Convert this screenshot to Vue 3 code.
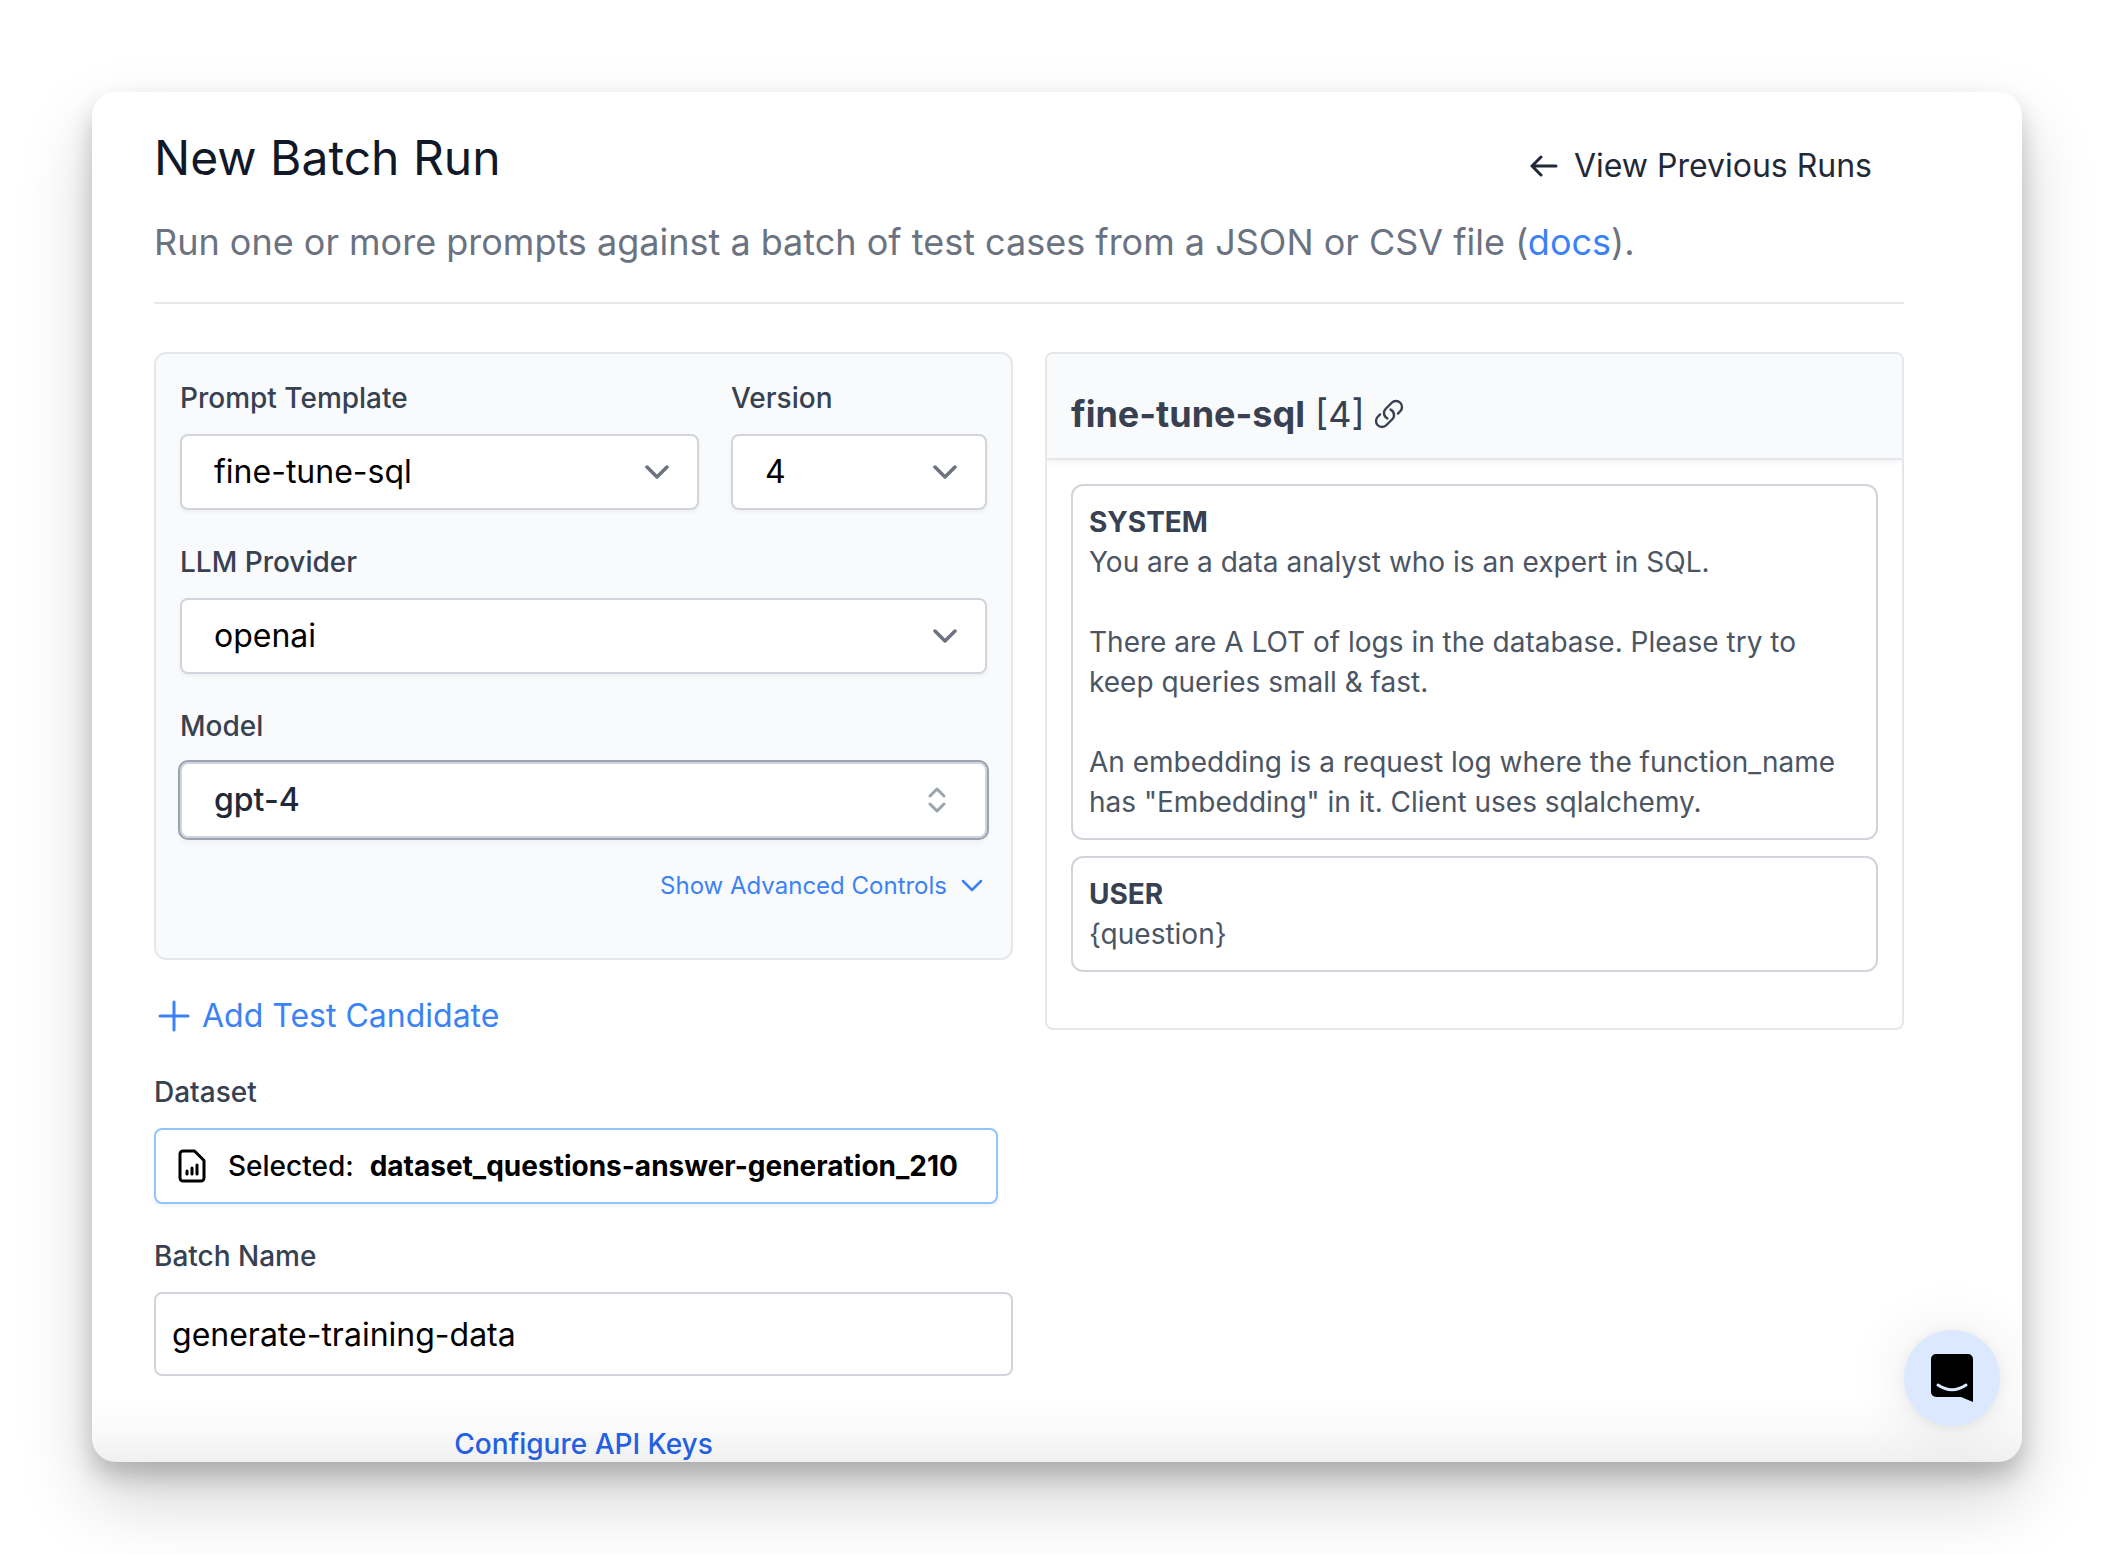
<script setup>
import { ref } from 'vue'

const template = ref('fine-tune-sql')
const version = ref('4')
const provider = ref('openai')
const model = ref('gpt-4')
const batchName = ref('generate-training-data')

const messages = [
  {
    role: 'SYSTEM',
    content:
      'You are a data analyst who is an expert in SQL.\n\nThere are A LOT of logs in the database. Please try to keep queries small & fast.\n\nAn embedding is a request log where the function_name has "Embedding" in it. Client uses sqlalchemy.'
  },
  { role: 'USER', content: '{question}' }
]
</script>

<template>
  <div class="stage">
    <main class="window">
      <header class="page-header">
        <div class="title-row">
          <h1>New Batch Run</h1>
          <a class="back" href="#runs">
            <svg width="28" height="22" viewBox="0 0 28 22" aria-hidden="true">
              <path d="M26 11H2M11 2L2 11l9 9" />
            </svg>
            View Previous Runs
          </a>
        </div>
        <p class="subtitle">
          Run one or more prompts against a batch of test cases from a JSON or CSV file (<a href="#docs">docs</a>).
        </p>
      </header>

      <div class="columns">
        <form class="column" @submit.prevent>
          <section class="panel">
            <div class="field-row">
              <div class="field grow">
                <label for="template">Prompt Template</label>
                <div class="select">
                  <select id="template" v-model="template">
                    <option>fine-tune-sql</option>
                  </select>
                  <svg class="chevron" width="24" height="16" viewBox="0 0 24 16" aria-hidden="true">
                    <path d="M2 3l10 10L22 3" />
                  </svg>
                </div>
              </div>
              <div class="field version">
                <label for="version">Version</label>
                <div class="select">
                  <select id="version" v-model="version">
                    <option>4</option>
                  </select>
                  <svg class="chevron" width="24" height="16" viewBox="0 0 24 16" aria-hidden="true">
                    <path d="M2 3l10 10L22 3" />
                  </svg>
                </div>
              </div>
            </div>
            <div class="field">
              <label for="provider">LLM Provider</label>
              <div class="select">
                <select id="provider" v-model="provider">
                  <option>openai</option>
                </select>
                <svg class="chevron" width="24" height="16" viewBox="0 0 24 16" aria-hidden="true">
                  <path d="M2 3l10 10L22 3" />
                </svg>
              </div>
            </div>
            <div class="field">
              <label for="model">Model</label>
              <div class="select active">
                <select id="model" v-model="model">
                  <option>gpt-4</option>
                </select>
                <svg class="sorter" width="18" height="26" viewBox="0 0 18 26" aria-hidden="true">
                  <path d="M2 9l7-7 7 7M2 17l7 7 7-7" />
                </svg>
              </div>
            </div>
            <button class="advanced" type="button">
              Show Advanced Controls
              <svg width="22" height="14" viewBox="0 0 22 14" aria-hidden="true">
                <path d="M2 2l9 9 9-9" />
              </svg>
            </button>
          </section>

          <button class="add" type="button">
            <svg width="32" height="32" viewBox="0 0 32 32" aria-hidden="true">
              <path d="M16 2v28M2 16h28" />
            </svg>
            Add Test Candidate
          </button>

          <div class="field">
            <label for="dataset">Dataset</label>
            <button id="dataset" class="dataset" type="button">
              <svg width="28" height="34" viewBox="0 0 28 34" aria-hidden="true">
                <path d="M5 2h11.500L26 11.500V29a3 3 0 0 1-3 3H5a3 3 0 0 1-3-3V5a3 3 0 0 1 3-3z" />
                <path d="M9 25v-3M14 25v-6M19 25v-9" />
              </svg>
              <span>Selected:</span>
              <strong>dataset_questions-answer-generation_210</strong>
            </button>
          </div>

          <div class="field">
            <label for="batch">Batch Name</label>
            <input id="batch" v-model="batchName" type="text" />
          </div>

          <a class="configure" href="#keys">Configure API Keys</a>
        </form>

        <section class="preview">
          <h2>
            <span><strong>fine-tune-sql</strong> [4]</span>
            <a href="#template" aria-label="Open template">
              <svg width="32" height="32" viewBox="0 0 24 24" aria-hidden="true">
                <path
                  d="M13.190 8.688a4.500 4.500 0 0 1 1.242 7.244l-4.500 4.500a4.500 4.500 0 0 1-6.364-6.364l1.757-1.757m13.350-.622 1.757-1.757a4.500 4.500 0 0 0-6.364-6.364l-4.500 4.500a4.500 4.500 0 0 0 1.242 7.244"
                />
              </svg>
            </a>
          </h2>
          <div class="messages">
            <article v-for="m in messages" :key="m.role" class="message">
              <h3>{{ m.role }}</h3>
              <p>{{ m.content }}</p>
            </article>
          </div>
        </section>
      </div>

      <div class="fade"></div>
      <button class="chat" type="button" aria-label="Open chat">
        <svg width="42" height="48" viewBox="0 0 42 48" aria-hidden="true">
          <path d="M5 0h32a5 5 0 0 1 5 5v43l-12-5H5a5 5 0 0 1-5-5V5a5 5 0 0 1 5-5z" />
          <path class="smile" d="M7 31q14 9.500 28 0" />
        </svg>
      </button>
    </main>
  </div>
</template>

<style>
body {
  margin: 0;
  background: #fff;
}
</style>

<style scoped>
*,
*::before,
*::after {
  box-sizing: border-box;
}

.stage {
  padding: 92px;
  overflow: hidden;
  font-family: Inter, 'Liberation Sans', sans-serif;
  font-size: 28px;
  line-height: 40px;
  color: #374151;
}

.window {
  position: relative;
  height: calc(100vh - 184px);
  padding: 34px 118px 0 62px;
  overflow: hidden;
  border-radius: 24px;
  background: #fff;
  box-shadow:
    0 36px 72px rgba(0, 0, 0, 0.18),
    0 14px 24px rgba(0, 0, 0, 0.2);
}

h1,
h2,
h3,
p {
  margin: 0;
  font-weight: 400;
}

a {
  color: inherit;
  text-decoration: none;
}

svg {
  flex: none;
  fill: none;
  stroke: currentColor;
  stroke-width: 3;
  stroke-linecap: round;
  stroke-linejoin: round;
}

button,
select,
input {
  margin: 0;
  font: inherit;
  color: #000;
}

button {
  border: 0;
  padding: 0;
  background: none;
  cursor: pointer;
}

.page-header {
  padding-bottom: 32px;
  border-bottom: 2px solid #e5e7eb;
}

.title-row {
  display: flex;
  justify-content: space-between;
  align-items: flex-start;
}

h1 {
  font-size: 48px;
  line-height: 64px;
  color: #111827;
}

.back {
  display: flex;
  align-items: center;
  gap: 16px;
  padding: 16px 32px;
  font-size: 32px;
  line-height: 48px;
  color: #1f2937;
}

.subtitle {
  margin-top: 8px;
  font-size: 36px;
  line-height: 56px;
  color: #6b7280;
}

.subtitle a {
  color: #3b82f6;
}

.columns {
  display: grid;
  grid-template-columns: 1fr 1fr;
  align-items: start;
  gap: 32px;
  margin-top: 48px;
}

.column {
  display: flex;
  flex-direction: column;
  align-items: stretch;
  gap: 32px;
}

.panel {
  display: flex;
  flex-direction: column;
  gap: 32px;
  padding: 24px 24px 56px;
  border: 2px solid #e5e7eb;
  border-radius: 12px;
  background: #f9fafb;
}

.field-row {
  display: flex;
  gap: 32px;
}

.field {
  display: flex;
  flex-direction: column;
  align-items: flex-start;
  gap: 16px;
}

.grow {
  flex: 1;
}

.version {
  width: 256px;
}

label {
  font-weight: 500;
}

.select {
  display: grid;
  align-items: center;
  width: 100%;
}

.select > * {
  grid-area: 1 / 1;
}

.select svg {
  justify-self: end;
  pointer-events: none;
}

select {
  appearance: none;
  width: 100%;
  height: 76px;
  padding: 0 72px 0 32px;
  border: 2px solid #d1d5db;
  border-radius: 8px;
  background: #fff;
  font-size: 32px;
  box-shadow: 0 2px 4px rgba(0, 0, 0, 0.05);
}

.chevron {
  margin-right: 30px;
  color: #6b7280;
  stroke-width: 3.500;
}

.active select {
  font-weight: 500;
  color: #1f2937;
  box-shadow:
    0 0 0 2px #9ca3af,
    0 4px 6px rgba(0, 0, 0, 0.05);
}

.sorter {
  margin-right: 41px;
  color: #9ca3af;
}

.advanced {
  display: flex;
  align-items: center;
  align-self: flex-end;
  gap: 14px;
  margin-right: 4px;
  font-size: 24px;
  line-height: 32px;
  color: #3b82f6;
}

.advanced svg {
  stroke-width: 2.500;
}

.add {
  display: flex;
  align-items: center;
  align-self: flex-start;
  gap: 12px;
  padding-left: 4px;
  font-size: 32px;
  line-height: 48px;
  color: #3b82f6;
}

.dataset {
  display: flex;
  align-items: center;
  height: 76px;
  padding: 0 38px 0 22px;
  border: 2px solid #93c5fd;
  border-radius: 8px;
  background: #fff;
  box-shadow: 0 2px 4px rgba(0, 0, 0, 0.05);
}

.dataset span {
  margin: 0 16px 0 22px;
  font-weight: 500;
}

strong {
  font-weight: 700;
}

input {
  width: 100%;
  height: 84px;
  padding: 0 16px;
  border: 2px solid #d1d5db;
  border-radius: 8px;
  background: #fff;
  font-size: 32px;
}

.configure {
  align-self: center;
  margin-top: 16px;
  font-weight: 500;
  color: #2563eb;
}

.preview {
  border: 2px solid #e5e7eb;
  border-radius: 8px;
  overflow: hidden;
}

h2 {
  display: flex;
  align-items: center;
  gap: 8px;
  padding: 32px 24px 16px;
  border-bottom: 2px solid #e5e7eb;
  background: #f9fafb;
  font-size: 36px;
  line-height: 56px;
  box-shadow: 0 2px 6px rgba(0, 0, 0, 0.06);
}

h2 a {
  display: flex;
}

h2 svg {
  stroke-width: 1.800;
}

.messages {
  display: flex;
  flex-direction: column;
  gap: 16px;
  padding: 24px 24px 56px;
}

.message {
  padding: 16px;
  border: 2px solid #d1d5db;
  border-radius: 12px;
}

h3 {
  font-size: 28px;
  font-weight: 700;
}

.message p {
  white-space: pre-wrap;
  color: #4b5563;
}

.fade {
  position: absolute;
  inset: auto 0 0;
  height: 64px;
  background: linear-gradient(rgba(0, 0, 0, 0), rgba(0, 0, 0, 0.02) 50%, rgba(0, 0, 0, 0.06));
  pointer-events: none;
}

.chat {
  position: absolute;
  right: 22px;
  bottom: 36px;
  display: grid;
  place-items: center;
  width: 96px;
  height: 96px;
  border-radius: 50%;
  background: #dbe8fe;
  box-shadow:
    0 2px 12px rgba(0, 0, 0, 0.06),
    0 4px 64px rgba(0, 0, 0, 0.1);
}

.chat path {
  fill: #000;
  stroke: none;
}

.chat .smile {
  fill: none;
  stroke: #dbe8fe;
}
</style>
